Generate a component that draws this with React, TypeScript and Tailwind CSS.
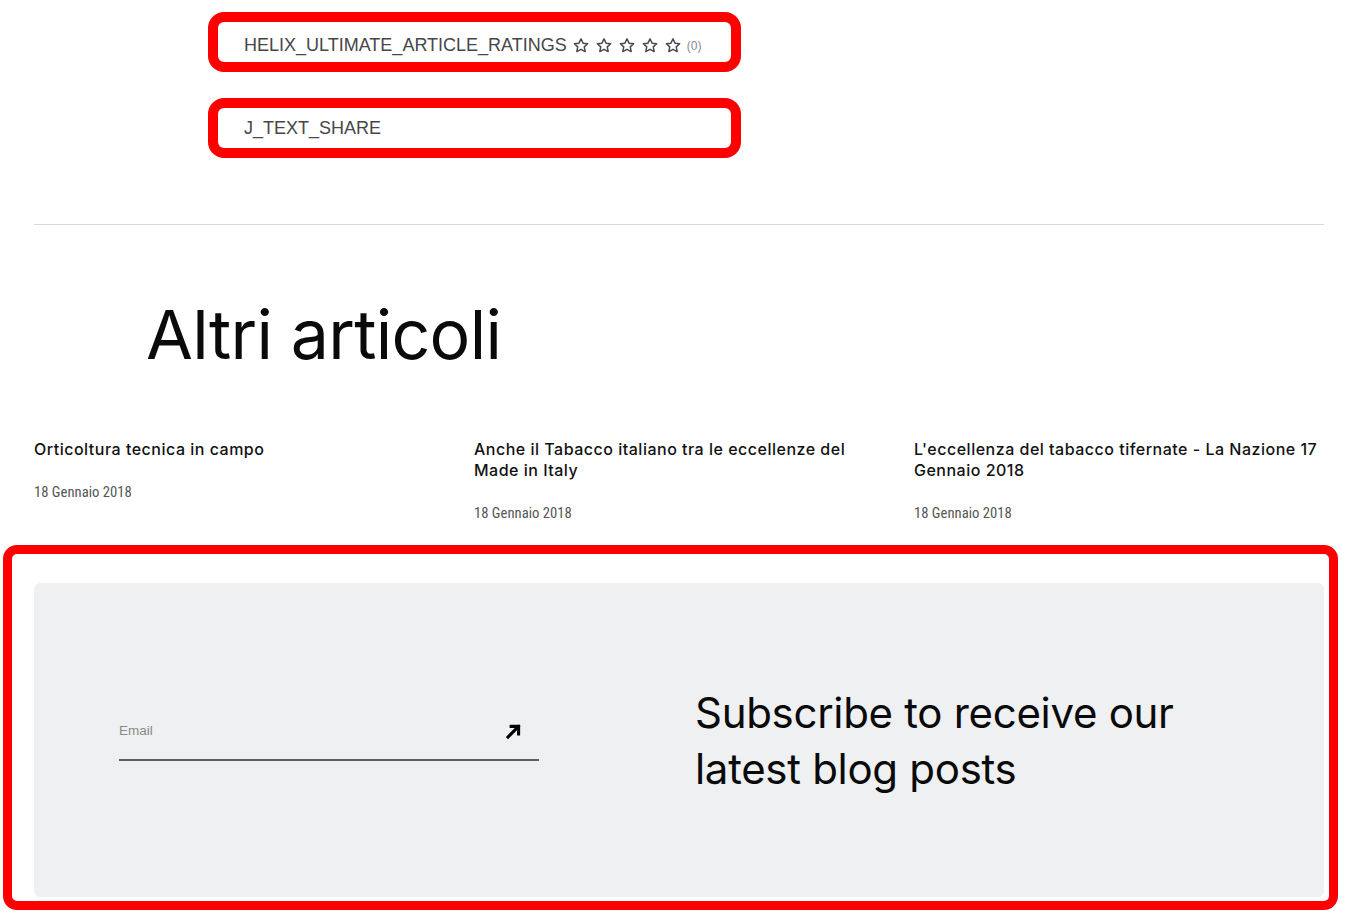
import React from "react";

const Star = () => (
  <svg width="18" height="17" viewBox="0 0 24 24" fill="none" stroke="#4a4a4a" strokeWidth="2.1" strokeLinejoin="round">
    <polygon points="12,2.6 14.9,8.7 21.4,9.5 16.6,14 17.9,20.6 12,17.4 6.1,20.6 7.4,14 2.6,9.5 9.1,8.7" />
  </svg>
);

const Arrow = () => (
  <svg width="17" height="17" viewBox="0 0 16 16" fill="none" stroke="#000" strokeWidth="2.9" strokeLinecap="square">
    <line x1="2.8" y1="13.2" x2="12.5" y2="3.5" />
    <polyline points="5.8,3.2 12.8,3.2 12.8,10.2" fill="none" />
  </svg>
);

const articles = [
  { title: "Orticoltura tecnica in campo", date: "18 Gennaio 2018" },
  { title: "Anche il Tabacco italiano tra le eccellenze del Made in Italy", date: "18 Gennaio 2018" },
  { title: "L'eccellenza del tabacco tifernate - La Nazione 17 Gennaio 2018", date: "18 Gennaio 2018" },
];

export default function App() {
  return (
    <div className="w-[1349px] h-[913px] bg-white overflow-hidden font-['Liberation_Sans',Arial,sans-serif]">
      <div className="pt-[12px] pl-[208px] flex flex-col gap-[26px]">
        <div className="w-[533px] h-[60px] border-[10px] border-[#ff0000] rounded-[16px] flex items-center pl-[26px] pt-[7px] text-[18px] text-[#474747]">
          <span>HELIX_ULTIMATE_ARTICLE_RATINGS</span>
          <span className="flex items-center gap-[5px] ml-[5px]">
            <Star />
            <Star />
            <Star />
            <Star />
            <Star />
          </span>
          <span className="ml-[5px] text-[12px] text-[#8a8a8a]">(0)</span>
        </div>
        <div className="w-[533px] h-[60px] border-[10px] border-[#ff0000] rounded-[16px] flex items-center pl-[26px] pt-[1px] text-[18px] text-[#474747]">
          J_TEXT_SHARE
        </div>
      </div>

      <div className="ml-[34px] w-[1290px] mt-[66px] border-t border-[#d9d9d9]" />

      <h2 className="mt-[68px] pl-[146px] font-['Inter',sans-serif] text-[68px] leading-[82px] font-normal text-[#0a0a0a] tracking-[-0.7px]">
        Altri articoli
      </h2>

      <div className="mt-[64px] ml-[34px] w-[1290px] grid grid-cols-3 gap-x-[30px]">
        {articles.map((a) => (
          <div key={a.title}>
            <div className="font-['Inter',sans-serif] text-[16px] leading-[21px] font-medium text-[#111] tracking-[0.5px]">
              {a.title}
            </div>
            <div className="mt-[22px] text-[14.7px] leading-[20px] text-[#555] font-['Liberation_Sans_Narrow','Arial_Narrow','Roboto_Condensed',sans-serif]">
              {a.date}
            </div>
          </div>
        ))}
      </div>

      <div className="mt-[22px] ml-[3px] w-[1335px] h-[365px] border-[9px] border-[#ff0000] rounded-[14px] pt-[29px] pl-[22px] pr-[5px] pb-[4px]">
        <div className="h-full bg-[#eff0f1] rounded-[6px] flex items-center pl-[85px]">
          <div className="w-[576px] shrink-0">
            <div className="w-[420px] h-[42px] border-b-2 border-[#5f5f5f] flex items-start justify-between pt-[4px] pr-[17px]">
              <span className="text-[13.5px] leading-[16px] text-[#8a8a8a]">Email</span>
              <Arrow />
            </div>
          </div>
          <div className="font-['Inter',sans-serif] text-[42px] leading-[56px] text-[#0a0a0a] tracking-[-0.3px] mt-[2px]">
            Subscribe to receive our
            <br />
            latest blog posts
          </div>
        </div>
      </div>
    </div>
  );
}
